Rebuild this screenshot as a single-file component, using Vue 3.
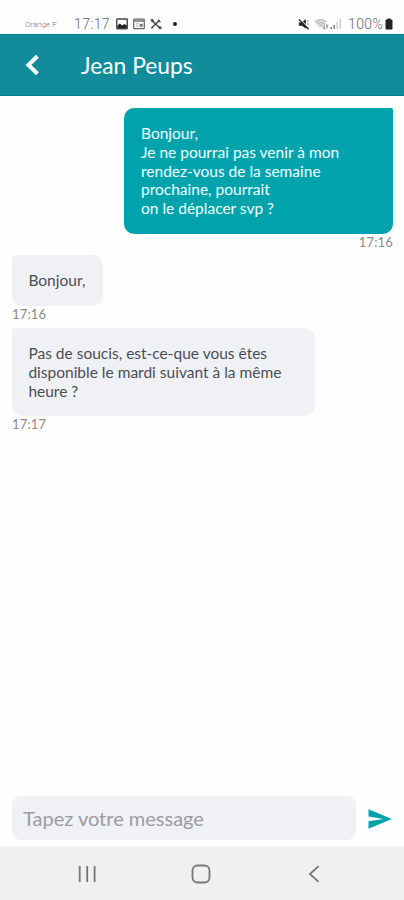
<script setup>
import { ref } from 'vue'

const draft = ref('')
const messages = [
  { id: 1, mine: true, time: '17:16', lines: ['Bonjour,', 'Je ne pourrai pas venir à mon', 'rendez-vous de la semaine', 'prochaine, pourrait', 'on le déplacer svp ?'] },
  { id: 2, mine: false, time: '17:16', lines: ['Bonjour,'] },
  { id: 3, mine: false, wide: true, time: '17:17', lines: ['Pas de soucis, est-ce-que vous êtes', 'disponible le mardi suivant à la même', 'heure ?'] },
]
</script>

<template>
  <div class="phone">
    <div class="status">
      <span class="carrier">Orange F</span>
      <span class="clock">17:17</span>
      <svg class="picture" width="12" height="12" viewBox="0 0 12 12">
        <rect x=".75" y="1" width="10.5" height="9.8" rx=".6" fill="none" stroke="#444" stroke-width="1.4" />
        <path d="M1.5 10V7.4L3.8 5.4l2.4 2L8.3 6l2.4 1.5V10z" fill="#222" />
      </svg>
      <svg class="news" width="12" height="12" viewBox="0 0 12 12">
        <rect x=".7" y="1.2" width="10.6" height="9.4" rx=".6" fill="none" stroke="#666" stroke-width="1.2" />
        <path d="M1 3h10" stroke="#666" stroke-width="1.4" />
        <path d="M3 5.8h2.5M3 8h2.5" stroke="#aaa" />
        <rect x="6.7" y="5.8" width="3" height="3" fill="#777" />
      </svg>
      <svg class="tools" width="12" height="12" viewBox="0 0 12 12">
        <path d="M2 2.4l8 7.8M9.6 2L1.4 10.2" stroke="#444" stroke-width="1.4" />
        <path d="M.9 1.4h2l.8 2-1.7.6zM8.8 8.4l2 .4.4 2-2-.1zM8.2 1.8l.4 1.8 2.2.4M1 9.2l1.5 1.4" fill="#444" stroke="#444" stroke-width=".7" />
      </svg>
      <i class="dot"></i>
      <svg class="mute" width="12" height="12" viewBox="0 0 12 12">
        <path d="M.8 4.4h3L7.8 1v9.8L4 7.8H.8z" fill="#222" />
        <path d="M1 .4l10.4 10.4" stroke="#fefefe" stroke-width="1.2" />
        <path d="M1 1.6l9.6 9.6" stroke="#222" stroke-width="1.4" />
        <path d="M9.1 3.6l1.3-1.1M9.4 6h1.2" stroke="#444" />
      </svg>
      <svg class="wifi" width="16" height="12" viewBox="0 0 16 12">
        <path d="M.8 4.1C4 .9 9.3.9 12.5 4.1L6.7 10.2z" fill="#ddd" />
        <path d="M.8 4.1c3.2-3.2 8.5-3.2 11.7 0M2.8 6.2c2.2-2.1 5.6-2.1 7.8 0M4.8 8.1c1.1-1 2.7-1 3.8 0" fill="none" stroke="#aaa" />
        <path d="M10.3 6.8v4l-1.4-1.5M12.8 11V7l1.4 1.5" fill="none" stroke="#999" stroke-width="1.1" />
      </svg>
      <svg class="signal" width="12" height="12" viewBox="0 0 12 12">
        <path d="M1.3 9v2M4.2 7v4" stroke="#777" stroke-width="1.4" />
        <path d="M7.1 4v7M10.2 1v10" stroke="#ccc" stroke-width="1.4" />
      </svg>
      <span class="percent">100%</span>
      <svg class="battery" width="8" height="12" viewBox="0 0 8 12">
        <path d="M2.5 1.6V.5h3v1.1h1.2q.8 0 .8.8v8.1q0 1-1 1h-5q-1 0-1-1V2.4q0-.8.8-.8z" fill="#222" />
      </svg>
    </div>

    <header class="header">
      <svg class="back" width="14" height="22" viewBox="0 0 14 22">
        <path d="M12.4 2.2L3.4 11l9 8.8" fill="none" stroke="#fff" stroke-width="4" />
      </svg>
      <h1 class="name">Jean Peups</h1>
    </header>

    <main class="thread">
      <article v-for="m in messages" :key="m.id" class="message" :class="{ mine: m.mine, wide: m.wide }">
        <div class="bubble">
          <div v-for="line in m.lines" :key="line">{{ line }}</div>
        </div>
        <time class="time">{{ m.time }}</time>
      </article>
    </main>

    <form class="composer" @submit.prevent>
      <input v-model="draft" class="field" type="text" placeholder="Tapez votre message">
      <button class="send" aria-label="Envoyer">
        <svg width="24" height="20" viewBox="0 0 24 20">
          <path d="M.5.3L23.8 10 .5 19.7v-7.4L15.5 10 .5 7.5z" fill="#00a3aa" />
        </svg>
      </button>
    </form>

    <nav class="nav">
      <svg width="18" height="18" viewBox="0 0 18 18">
        <path d="M1.7 1v16M9.2 1v16M16.6 1v16" stroke="#777" stroke-width="1.8" />
      </svg>
      <svg class="home" width="20" height="20" viewBox="0 0 20 20">
        <rect x="1.5" y="1.5" width="17" height="17" rx="5" fill="none" stroke="#777" stroke-width="1.8" />
      </svg>
      <svg width="12" height="18" viewBox="0 0 12 18">
        <path d="M10.5 1.2L2 9l8.5 7.8" fill="none" stroke="#777" stroke-width="1.8" />
      </svg>
    </nav>
  </div>
</template>

<style>
body { margin: 0; background: #fefefe; }
</style>

<style scoped>
.phone {
  box-sizing: border-box;
  width: 404px;
  height: 900px;
  display: flex;
  flex-direction: column;
  overflow: hidden;
  background: #fefefe;
  font-family: Lato, "Noto Sans", sans-serif;
}
svg { display: block; flex: none; }
.status {
  height: 20px;
  padding: 14px 11px 0 25px;
  display: flex;
  align-items: center;
  color: #666;
  font-family: Roboto, "Noto Sans", sans-serif;
  font-weight: 300;
  white-space: nowrap;
}
.carrier { width: 49px; font-size: 8px; color: #777; }
.clock { width: 42px; font-size: 14px; letter-spacing: .4px; }
.news { margin-left: 5px; }
.tools { margin-left: 5px; }
.dot { width: 4px; height: 4px; margin-left: 11px; border-radius: 50%; background: #222; }
.mute { margin-left: auto; }
.wifi { margin-left: 4px; }
.signal { margin-left: 0; }
.percent { width: 37px; margin-left: 6px; font-size: 14px; letter-spacing: .4px; }
.header {
  box-sizing: border-box;
  height: 62px;
  padding: 0 25px;
  display: flex;
  align-items: center;
  background: #128c9b;
  border-top: 1px solid #08808e;
  border-bottom: 1px solid #087f8d;
}
.name {
  margin: 0 0 0 42px;
  color: #fff;
  font-size: 22.8px;
  line-height: 30px;
  font-weight: 400;
}
.thread {
  flex: 1;
  padding: 12px 11px 0 12px;
  display: flex;
  flex-direction: column;
  align-items: flex-start;
  gap: 5px;
}
.message { display: flex; flex-direction: column; align-items: flex-start; }
.mine { align-self: flex-end; align-items: flex-end; margin-bottom: -.7px; }
.bubble {
  box-sizing: border-box;
  width: 91px;
  padding: 16px 16px 16px 16.4px;
  border-radius: 3px 10px 10px 10px;
  background: #f0f1f5;
  color: #4b4d56;
  font-size: 15.5px;
  line-height: 18.8px;
  white-space: nowrap;
}
.wide .bubble { width: 303px; }
.mine .bubble {
  width: 269px;
  padding-left: 17px;
  border-radius: 10px 2px 10px 10px;
  background: #00a3ac;
  color: #f2ffff;
}
.time { color: #8a8a8a; font-size: 13px; line-height: 17px; letter-spacing: .15px; }
.composer {
  height: 44px;
  padding: 0 12px 6px;
  display: flex;
  align-items: center;
}
.field {
  box-sizing: border-box;
  width: 344px;
  height: 44px;
  padding: 0 11px;
  border: 0;
  outline: 0;
  border-radius: 9px;
  background: #f0f1f5;
  color: #474952;
  font: 400 20px Lato, "Noto Sans", sans-serif;
}
.field::placeholder { color: #9a9ca2; opacity: 1; }
.send { margin: 1px 0 0 12px; padding: 0; border: 0; background: none; }
.nav {
  height: 54px;
  padding: 1px 84px 0 78px;
  box-sizing: border-box;
  display: flex;
  align-items: center;
  background: #f0f0f0;
}
.nav svg:last-child { margin-left: auto; }
.home { margin-left: 95px; }
</style>
